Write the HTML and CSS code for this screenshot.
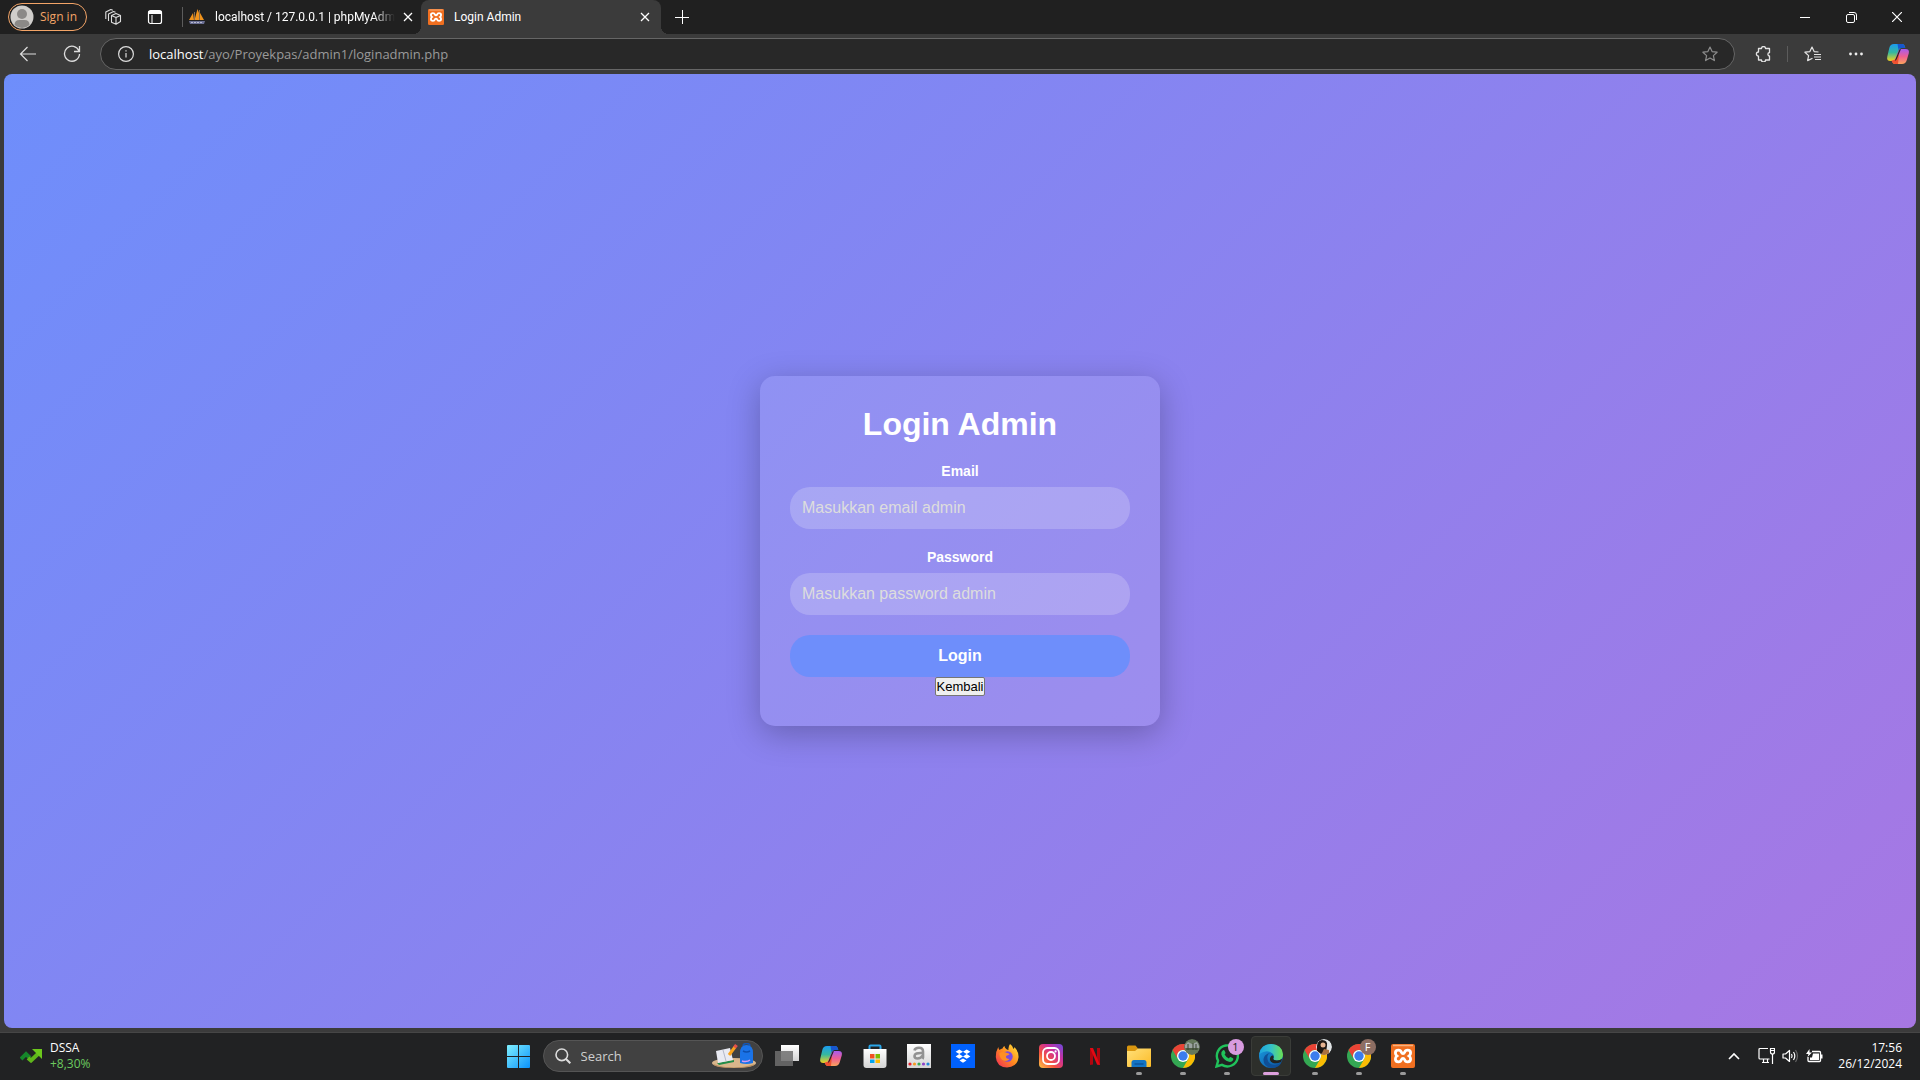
FILE: index.html
```html
<!DOCTYPE html>
<html lang="id">
<head>
<meta charset="utf-8">
<title>Login Admin</title>
<link rel="stylesheet" href="styles.css">
</head>
<body>
<svg class="defs" aria-hidden="true">
  <defs>
    <linearGradient id="cp1" x1="0" y1="0" x2="0" y2="1"><stop offset="0" stop-color="#1b9bf0"/><stop offset=".5" stop-color="#35b8a0"/><stop offset="1" stop-color="#f3d21c"/></linearGradient>
    <linearGradient id="cp2" x1="0" y1="0" x2="0" y2="1"><stop offset="0" stop-color="#a65cf0"/><stop offset=".5" stop-color="#ee5f93"/><stop offset="1" stop-color="#fba35c"/></linearGradient>
    <linearGradient id="win" x1="0" y1="0" x2="1" y2="1"><stop offset="0" stop-color="#7ff0ff"/><stop offset="1" stop-color="#0a91fa"/></linearGradient>
    <linearGradient id="ig" x1="0" y1="1" x2="1" y2="0"><stop offset="0" stop-color="#ffc845"/><stop offset=".35" stop-color="#f4513f"/><stop offset=".65" stop-color="#cb2f9c"/><stop offset="1" stop-color="#6b4be0"/></linearGradient>
    <linearGradient id="ff" x1="1" y1="0" x2="0" y2="1"><stop offset="0" stop-color="#ffe93b"/><stop offset=".5" stop-color="#ff8a1f"/><stop offset="1" stop-color="#f2245c"/></linearGradient>
    <linearGradient id="eg1" x1="0" y1="0" x2="1" y2="0"><stop offset="0" stop-color="#1ba3e0"/><stop offset=".5" stop-color="#35c1c8"/><stop offset="1" stop-color="#6be04f"/></linearGradient>
    <linearGradient id="eg2" x1="0" y1="0" x2="1" y2="1"><stop offset="0" stop-color="#1b9de2"/><stop offset="1" stop-color="#0b4f9c"/></linearGradient>
    <linearGradient id="fold" x1="0" y1="0" x2="1" y2="1"><stop offset="0" stop-color="#ffe07a"/><stop offset="1" stop-color="#fcbb27"/></linearGradient>
    <linearGradient id="white" x1="0" y1="0" x2="0" y2="1"><stop offset="0" stop-color="#fff"/><stop offset="1" stop-color="#d4d4d4"/></linearGradient>
  </defs>
  <symbol id="close" viewBox="0 0 16 16"><path d="M4 4l8 8M12 4l-8 8" fill="none" stroke="currentColor" stroke-width="1.300"/></symbol>
  <symbol id="copilot" viewBox="0 0 24 24">
    <path d="M8 2h8q2 0 2.600 1.800l.7 2.200h-3.800q-2 0-2.600 1.800L9.800 17q-.8 2-2.800 2H4.500Q.3 19 1.300 14.500L3.300 6Q4.200 2 8 2z" fill="url(#cp1)"/>
    <path d="M11.500 2h4.500q2 0 2.600 1.800l.7 2.200h-3.800q-2.500 0-3 2z" fill="#1756cf"/>
    <path d="M16 22H9q-2 0-2.600-1.700L5.500 18.500q3 .5 4-2.400L12.300 9Q13 7 15 7h4.500q4.200 0 3.300 4.300L20.800 18q-1 4-4.800 4z" fill="url(#cp2)"/>
    <path d="M12 22H9q-2 0-2.600-1.700L5.500 18.500q3.500.500 4.800-2.400L13 12z" fill="#f0502f"/>
    <path d="M13 8.500q.5-1.500 2-1.500L10.800 17q-.5 1.500-2 1.800z" fill="#262626"/>
  </symbol>
  <symbol id="xampp" viewBox="0 0 24 24">
    <rect width="24" height="24" rx="2" fill="#f06f20"/>
    <path d="M2 1.500h20" stroke="#f9b27d" stroke-width="1.500"/>
    <path d="M7.500 6.200Q9.700 6.200 10.300 8.200Q11 9.600 12 9.600Q13 9.600 13.700 8.200Q14.300 6.200 16.500 6.200Q19.600 6.200 19.600 9Q19.600 10.800 18 12Q19.600 13.200 19.600 15Q19.600 17.800 16.500 17.800Q14.300 17.800 13.700 15.800Q13 14.400 12 14.400Q11 14.400 10.300 15.800Q9.700 17.800 7.500 17.800Q4.400 17.800 4.400 15Q4.400 13.200 6 12Q4.400 10.800 4.400 9Q4.400 6.200 7.500 6.200z" fill="none" stroke="#fff" stroke-width="2.800"/>
  </symbol>
  <symbol id="chrome" viewBox="0 0 24 24">
    <circle cx="12" cy="12" r="12" fill="#34a853"/>
    <path d="M1.600 6A12 12 0 0 1 22.400 6H12a6 6 0 0 0-5.200 9z" fill="#ea4335"/>
    <path d="M22.400 6A12 12 0 0 1 12 24l5.200-9A6 6 0 0 0 12 6z" fill="#fbbc04"/>
    <circle cx="12" cy="12" r="6" fill="#fff"/><circle cx="12" cy="12" r="4.700" fill="#3b7ded"/>
  </symbol>
</svg>

<header class="titlebar">
  <button class="profile">
    <svg width="24" height="24" viewBox="0 0 24 24" aria-hidden="true"><circle cx="12" cy="12" r="11.500" fill="#d0cecb"/><circle cx="12" cy="9" r="5" fill="#8b8987"/><path d="M4.500 20q0-5 5-5h5q5 0 5 5a11 11 0 0 1-15 0z" fill="#8b8987"/></svg>
    <span>Sign in</span>
  </button>
  <button class="bar-btn" aria-label="Workspaces">
    <svg width="18" height="18" viewBox="0 0 18 18" fill="none" stroke="#ddd" stroke-width="1.100" stroke-linejoin="round"><path d="M7.500 7.500L12 5.500l4.500 2v6L12 16.300l-4.500-2zM7.500 7.500l4.500 2 4.500-2M12 9.500v6.800M4.500 13V6l5-2.500 2 .8M1.800 11V4l5-2.500 2 .8"/></svg>
  </button>
  <button class="bar-btn" aria-label="Tab actions">
    <svg width="16" height="16" viewBox="0 0 16 16"><rect x="1.500" y="1.500" width="13" height="13" rx="2" fill="none" stroke="#fff" stroke-width="1.200"/><path d="M1.500 2h13v3h-13z" fill="#fff"/><path d="M5 6v8" stroke="#fff"/></svg>
  </button>
  <span class="divider tab-divider"></span>
  <nav class="tabs" aria-label="Tabs">
    <div class="tab">
      <svg class="favicon" viewBox="0 0 16 16" aria-hidden="true"><path d="M0 11L4 4l1 7zM5.500 11L8.500 0l1.500 4v7zM10.500 11V3L15 11z" fill="#f0931c"/><path d="M5.500 3v8M10.500 1v10" stroke="#8a6d4a"/><path d="M0 12h16l-1 3H1z" fill="#6b6f93"/><path d="M2 13.500h12" stroke="#b6b9d0" stroke-dasharray="2 1"/></svg>
      <a class="tab-title faded" href="#">localhost / 127.0.0.1 | phpMyAdm</a>
      <button class="tab-close" aria-label="Close tab"><svg width="16" height="16"><use href="#close"/></svg></button>
    </div>
    <div class="tab active">
      <svg class="favicon" aria-hidden="true"><use href="#xampp"/></svg>
      <a class="tab-title" href="#">Login Admin</a>
      <button class="tab-close" aria-label="Close tab"><svg width="16" height="16"><use href="#close"/></svg></button>
    </div>
  </nav>
  <button class="new-tab" aria-label="New tab"><svg width="16" height="16" viewBox="0 0 16 16"><path d="M8.500 1v14M1 8.500h14" stroke="#fff"/></svg></button>
  <div class="window-controls">
    <button aria-label="Minimize"><svg width="10" height="10" viewBox="0 0 10 10"><path d="M0 5.500h10" stroke="#fff"/></svg></button>
    <button aria-label="Restore"><svg width="11" height="11" viewBox="0 0 11 11" fill="none" stroke="#fff"><rect x=".5" y="2.500" width="8" height="8" rx="1.500"/><path d="M3 .5h5q2.500 0 2.500 2.500v5"/></svg></button>
    <button aria-label="Close"><svg width="10" height="10" viewBox="0 0 10 10"><path d="M0 0l10 10M10 0L0 10" stroke="#fff" stroke-width="1.200"/></svg></button>
  </div>
</header>

<div class="toolbar">
  <button class="tool-btn" aria-label="Back"><svg width="18" height="18" viewBox="0 0 18 18" fill="none" stroke="#ddd" stroke-width="1.200"><path d="M17 9H1.500M8.500 2l-7 7 7 7"/></svg></button>
  <button class="tool-btn" aria-label="Refresh"><svg width="18" height="18" viewBox="0 0 18 18" fill="none" stroke="#ddd" stroke-width="1.300"><path d="M16 6A7.500 7.500 0 1 0 16.500 9M16.500 1v5.500H11"/></svg></button>
  <div class="address">
    <svg width="16" height="16" viewBox="0 0 16 16" fill="none" stroke="#ddd" stroke-width="1.200" aria-hidden="true"><circle cx="8" cy="8" r="7.400"/><path d="M8 7v4.500M8 4.200v1.400"/></svg>
    <div class="url" role="textbox" contenteditable="true" spellcheck="false" aria-label="Address"><span class="host">localhost</span>/ayo/Proyekpas/admin1/loginadmin.php</div>
    <button class="star" aria-label="Add to favorites"><svg width="16" height="16" viewBox="0 0 16 16" fill="none" stroke="#8c8c8c" stroke-width="1.200" stroke-linejoin="round"><path d="M8 1l2.100 4.600 5 .6-3.700 3.400 1 5L8 12.100l-4.400 2.500 1-5L.9 6.200l5-.6z"/></svg></button>
  </div>
  <button class="tool-btn" aria-label="Extensions"><svg width="16" height="16" viewBox="0 0 16 16" fill="none" stroke="#e4e4e4" stroke-width="1.300" stroke-linejoin="round"><path d="M6.500 2.500a2 2 0 0 1 4 0h4v4.200a1.600 1.600 0 1 0 0 3.200V14h-4a2 2 0 0 1-4 0H3.500v-3.800a2.100 2.100 0 1 1 0-4.200V2.500z"/></svg></button>
  <span class="divider"></span>
  <button class="tool-btn" aria-label="Favorites"><svg width="17" height="16" viewBox="0 0 17 16" fill="none" stroke="#e4e4e4" stroke-width="1.200" stroke-linejoin="round"><path d="M8.500 12.300L3.600 14.600l1-5L.9 6.200l5-.6L8 1l2.100 4.600 4.400.4M10 8.500h7M10 11h7M11 13.500h6"/></svg></button>
  <button class="tool-btn" aria-label="Settings and more"><svg width="14" height="4" viewBox="0 0 14 4" fill="#eee"><circle cx="1.500" cy="2" r="1.400"/><circle cx="7" cy="2" r="1.400"/><circle cx="12.500" cy="2" r="1.400"/></svg></button>
  <button class="tool-btn last" aria-label="Copilot"><svg width="24" height="24"><use href="#copilot"/></svg></button>
</div>

<main class="page">
  <form class="card">
    <h1>Login Admin</h1>
    <label for="email">Email</label>
    <input class="field" id="email" type="email" placeholder="Masukkan email admin">
    <label for="password">Password</label>
    <input class="field" id="password" type="password" placeholder="Masukkan password admin">
    <button class="submit" type="button">Login</button>
    <button class="back" type="button">Kembali</button>
  </form>
</main>

<footer class="taskbar">
  <button class="widget">
    <svg width="23" height="14" viewBox="0 0 23 14" aria-hidden="true"><path d="M1 10l5-5 4 4" fill="none" stroke="#16862a" stroke-width="4"/><path d="M8 9l3 2.500L19 4" fill="none" stroke="#5fb61b" stroke-width="4"/><path d="M12 0h10v10z" fill="#6cc81c"/></svg>
    <span class="widget-text"><span>DSSA</span><span class="gain">+8,30%</span></span>
  </button>
  <div class="apps">
    <button class="app" aria-label="Start"><svg width="24" height="24" viewBox="0 0 24 24"><path d="M2 1h10v11H1V2q0-1 1-1zM13 1h10q1 0 1 1v10H13zM1 13h11v11H2q-1 0-1-1zM13 13h11v10q0 1-1 1H13z" fill="url(#win)"/></svg></button>
    <div class="search">
      <svg width="16" height="16" viewBox="0 0 16 16" fill="none" stroke="#ddd" stroke-width="1.600" aria-hidden="true"><circle cx="6.800" cy="6.800" r="5.800"/><path d="M11 11l4.300 4.300" stroke-width="2"/></svg>
      <input type="search" placeholder="Search" aria-label="Search">
      <svg width="46" height="26" viewBox="0 0 46 26" aria-hidden="true"><ellipse cx="23" cy="20" rx="22" ry="5" fill="#d9b68c"/><path d="M2 21q20 7 42 0-2 4-21 4T2 21z" fill="#b98f60"/><path d="M6 20l17-3v2L8 22z" fill="#238c4a"/><path d="M5 8l14-3 3 12-15 3z" fill="#e9eaf2"/><path d="M12 7l3 11" stroke="#b4b8c9" fill="none"/><path d="M24 4l-6 8" stroke="#f9a21b" stroke-width="3"/><path d="M25.500 2L23.500 4.500" stroke="#e3524a" stroke-width="3.500"/><path d="M32 3q0-2.500 3.500-2.500t3.500 2.500" fill="none" stroke="#1355b5" stroke-width="1.500"/><path d="M29 20V10q0-8 6.500-8t6.500 8v10q-6.500 2-13 0z" fill="#1a73e8"/><path d="M32 8q3.500 2 7 0" stroke="#0d4fae" stroke-width="1.500" fill="none"/><path d="M31 18q5 1.500 8-1" stroke="#d29bf5" stroke-width="1.500" fill="none"/></svg>
    </div>
    <button class="app" aria-label="Task view"><svg width="24" height="24" viewBox="0 0 24 24"><rect x="6" y="1" width="18" height="16" fill="url(#white)"/><rect y="7" width="18" height="15" fill="#6f6f6f" fill-opacity=".85"/></svg></button>
    <button class="app" aria-label="Copilot"><svg width="24" height="24"><use href="#copilot"/></svg></button>
    <button class="app" aria-label="Microsoft Store"><svg width="24" height="24" viewBox="0 0 24 24"><path d="M6.500 6V2.500q0-1 1-1h9q1 0 1 1V6" fill="none" stroke="#2aa5e8" stroke-width="2"/><path d="M.5 5h23v16q0 3-3 3h-17q-3 0-3-3z" fill="url(#white)"/><path d="M7 10h4.500v4.500H7z" fill="#f25022"/><path d="M12.500 10H17v4.500h-4.500z" fill="#7fba00"/><path d="M7 15.500h4.500V19H7z" fill="#00a4ef"/><path d="M12.500 15.500H17V19h-4.500z" fill="#ffb900"/></svg></button>
    <button class="app" aria-label="Amazon"><svg width="24" height="24" viewBox="0 0 24 24"><path d="M0 0h24v24H0z" fill="url(#white)"/><path d="M7.500 6.500Q8 3.800 12 3.800t4 3.700V13q0 1.200 1 1.500M15.500 9Q7.500 8.500 7.500 12q0 2.500 3 2.500 3.500 0 5-3" fill="none" stroke="#929292" stroke-width="2.600"/><circle cx="3" cy="20" r="1.600" fill="#e9222d"/><circle cx="7.500" cy="20" r="1.600" fill="#f59a23"/><circle cx="12" cy="20" r="1.600" fill="#36a853"/><circle cx="16.500" cy="20" r="1.600" fill="#8e44c9"/><circle cx="21" cy="20" r="1.600" fill="#2088d8"/></svg></button>
    <button class="app" aria-label="Dropbox"><svg width="24" height="24" viewBox="0 0 24 24"><path d="M0 0h24v24H0z" fill="#0061fe"/><path d="M8.300 5.500l3.700 2.300-3.700 2.300-3.700-2.300zM15.700 5.500l3.700 2.300-3.700 2.300L12 7.800zM8.300 10.100l3.700 2.300-3.700 2.300-3.700-2.300zM15.700 10.100l3.700 2.300-3.700 2.300-3.700-2.300zM12 14.500l3.500 2.100-3.500 2.200-3.500-2.200z" fill="#fff"/></svg></button>
    <button class="app" aria-label="Firefox"><svg width="24" height="24" viewBox="0 0 24 24"><path d="M15 0q3 2 3.500 5 1-1 1-2 4.500 5 4 10.500Q22.500 23 12 23.500 1.500 23 .8 13 .8 7 3.300 3q.2 2 1.200 3 1.500-1.500 3-1.500Q8 2.500 9.500 2q.5 3 4 4Q13 3 15 0z" fill="url(#ff)"/><circle cx="12.500" cy="12.500" r="5.200" fill="#7a4be0"/><path d="M4.500 9q4-2 7.500 0 2.500 0 2.500 1.500L11 12q-.5 3 3.500 3-3 3.500-7 1Q4 13 4.500 9z" fill="#ff8f24"/></svg></button>
    <button class="app" aria-label="Instagram"><svg width="24" height="24" viewBox="0 0 24 24"><rect width="24" height="24" rx="4" fill="url(#ig)"/><g fill="none" stroke="#fff" stroke-width="1.800"><rect x="4" y="4" width="16" height="16" rx="4.500"/><circle cx="12" cy="12" r="4"/></g><circle cx="16.600" cy="7.400" r="1.100" fill="#fff"/></svg></button>
    <button class="app" aria-label="Netflix"><svg width="24" height="24" viewBox="0 0 24 24"><path d="M7 4h3v16.500l-3 .5zM14 4h3v17l-3-.5z" fill="#b1060f"/><path d="M7 4h3l7 17-3-.5z" fill="#e50914"/></svg></button>
    <button class="app running" aria-label="File Explorer"><svg width="24" height="24" viewBox="0 0 24 24"><path d="M0 3q0-1.500 1.500-1.500h7L11 4.500 9 8H0z" fill="#d9960f"/><path d="M0 7h8l3-2.500h13V22q0 1-1 1H1q-1 0-1-1z" fill="url(#fold)"/><path d="M4.500 23v-4.500q0-2.500 2.500-2.500h10q2.500 0 2.500 2.500V23z" fill="#1374c4"/><path d="M7.500 20h9" stroke="#0d559c" stroke-width="1.500"/></svg></button>
    <button class="app running" aria-label="Chrome"><svg width="24" height="24"><use href="#chrome"/></svg><svg class="badge" viewBox="0 0 16 16"><circle cx="8" cy="8" r="8" fill="#64785a"/><path d="M1 6l3-3 4 2 5-2 2 4v2H1z" fill="#9aa3a0"/><path d="M2 10h12M4 5v6M9 4v7M12 5v6" stroke="#39452f"/></svg></button>
    <button class="app running" aria-label="WhatsApp"><svg width="24" height="24" viewBox="0 0 24 24"><path d="M1.500 22.500l1.600-5.700A10.500 10.500 0 1 1 7 20.900z" fill="none" stroke="#20c25b" stroke-width="2.400"/><path d="M8 6.200q1-.5 1.500.3l1 2.300q.2.600-.9 1.800 1.500 2.800 4.300 3.800 1-1.400 1.700-1.300l2.400 1.200q.8.500 0 2-1.200 2-4 1.500Q8 16 6.300 10.500 5.800 7.500 8 6.200z" fill="#20c25b"/></svg><span class="badge count">1</span></button>
    <button class="app running current" aria-label="Microsoft Edge"><svg width="24" height="24" viewBox="0 0 24 24"><circle cx="12" cy="12" r="12" fill="url(#eg2)"/><path d="M.3 10Q2 0 12 0q11 0 12 10.500 0 6-6 6-4.500 0-3.500-2.500 1.500-2-1-4.500Q8 5 .3 10z" fill="url(#eg1)"/><path d="M8.500 12q-1 8 7 9 4 .2 7-3-2 6-10.500 6Q4 22 4.500 15q1-5 6.500-6-2 1-2.500 3z" fill="#0f4f97"/><path d="M14.500 14q-1 2.500 3.500 2.500 3 0 5.300-1.800L22 18q-4 2-8 1-4.500-2-2.500-6 1-2 2.500-1.500 1 1.500.5 2.500z" fill="#222421"/></svg></button>
    <button class="app running" aria-label="Chrome"><svg width="24" height="24"><use href="#chrome"/></svg><svg class="badge" viewBox="0 0 16 16"><circle cx="8" cy="8" r="8" fill="#dfe3e4"/><path d="M1 12Q0 1 6 1t5 6l-1 6-5 2z" fill="#1d1815"/><circle cx="7" cy="6" r="2.500" fill="#e5b492"/><path d="M5 16l3-6 5 1v3q-3 3-8 2z" fill="#a9713f"/></svg></button>
    <button class="app running" aria-label="Chrome"><svg width="24" height="24"><use href="#chrome"/></svg><span class="badge initial">F</span></button>
    <button class="app running" aria-label="XAMPP"><svg width="24" height="24"><use href="#xampp"/></svg></button>
  </div>
  <div class="tray">
    <button aria-label="Show hidden icons"><svg width="12" height="8" viewBox="0 0 12 8"><path d="M1 7l5-5 5 5" fill="none" stroke="#fff" stroke-width="1.600"/></svg></button>
    <button class="status" aria-label="Network, sound, battery">
      <svg width="17" height="17" viewBox="0 0 17 17" fill="none" stroke="#fff" stroke-width="1.200"><path d="M10 1.500H2q-1 0-1 1V11q0 1 1 1h9.500M4 15.500h7M5.500 12v3.500M9.500 12v3.500M14.500 7v10"/><path d="M12.500 1.500h4V5q0 2-2 2t-2-2zM12.500 3.500h4"/></svg>
      <svg width="17" height="14" viewBox="0 0 17 14" fill="none" stroke="#fff" stroke-width="1.200"><path d="M1 5h2.500L7.500 1.500v11L3.500 9H1z" stroke-linejoin="round"/><path d="M9.500 5q1.200 2 0 4M11.500 3q2.600 4 0 8"/><path d="M13.500 1q4 6 0 12" stroke="#666"/></svg>
      <svg width="17" height="14" viewBox="0 0 17 14"><path d="M6 2.500h7.500q1 0 1 1v8q0 1-1 1H3q-1 0-1-1V8" fill="none" stroke="#fff" stroke-width="1.300"/><path d="M7 4.500h6v6.500H4V8.500h2zM15 5.500h1.500v4H15zM3.500 0L0 5h2.500L1.500 8 6 3.500H3.500z" fill="#fff"/></svg>
    </button>
    <button class="clock"><time>17:56</time><span>26/12/2024</span></button>
  </div>
</footer>
</body>
</html>
```
FILE: styles.css
```css
* { box-sizing: border-box; }

body {
  margin: 0;
  height: 100vh;
  display: flex;
  flex-direction: column;
  overflow: hidden;
  background: #3b3b3b;
  color: #fff;
  font: 12px/16px "Open Sans", "Noto Sans", sans-serif;
}

button {
  display: flex;
  align-items: center;
  justify-content: center;
  padding: 0;
  border: 0;
  background: none;
  color: inherit;
  font: inherit;
}

a { color: inherit; text-decoration: none; }
svg { flex: none; }
.defs { position: absolute; width: 0; height: 0; }

.divider { width: 1px; height: 16px; background: #5c5c5c; }

/* Browser title bar */
.titlebar {
  display: flex;
  align-items: center;
  height: 34px;
  flex: none;
  background: #202020;
}
.profile {
  width: 79px;
  height: 28px;
  margin: 0 5px 0 8px;
  gap: 6px;
  padding: 0 10px 0 1px;
  justify-content: flex-start;
  border: 1px solid #f3a467;
  border-radius: 14px;
  color: #f3a467;
  white-space: nowrap;
}
.bar-btn { width: 42px; height: 34px; }
.tab-divider { height: 20px; margin-left: 6px; }
.tabs { display: flex; align-self: stretch; font-family: Roboto, "Noto Sans", sans-serif; }
.tab {
  display: flex;
  align-items: center;
  gap: 10px;
  width: 238px;
  padding: 0 7px 0 6px;
}
.tab.active {
  position: relative;
  width: 240px;
  padding: 0 8px 0 7px;
  border-radius: 8px 8px 0 0;
  background: #3b3b3b;
}
.tab.active::before,
.tab.active::after {
  content: "";
  position: absolute;
  bottom: 0;
  width: 8px;
  height: 8px;
}
.tab.active::before { left: -8px; background: radial-gradient(circle at 0 0, transparent 8px, #3b3b3b 8px); }
.tab.active::after { right: -8px; background: radial-gradient(circle at 100% 0, transparent 8px, #3b3b3b 8px); }
.favicon { width: 16px; height: 16px; }
.tab-title { flex: 1; white-space: nowrap; }
.faded { margin-right: -5px; mask-image: linear-gradient(to right, #000 88%, transparent); }
.new-tab { width: 32px; height: 32px; margin-left: 5px; }
.window-controls { display: flex; margin-left: auto; }
.window-controls button { width: 46px; height: 34px; }

/* Browser toolbar */
.toolbar {
  display: flex;
  align-items: center;
  gap: 4px;
  height: 40px;
  flex: none;
  padding: 0 4px 0 8px;
}
.tool-btn { width: 40px; height: 32px; }
.tool-btn.last { width: 36px; }
.address {
  display: flex;
  align-items: center;
  flex: 1;
  gap: 15px;
  height: 32px;
  margin: 0 4px;
  padding: 0 16px 0 17px;
  border: 1px solid #666;
  border-radius: 16px;
  background: #282828;
}
.url {
  flex: 1;
  color: #9a9a9a;
  font-size: 13px;
  line-height: 20px;
  white-space: nowrap;
  outline: none;
}
.host { color: #fff; }

/* Login page */
.page {
  display: flex;
  align-items: center;
  justify-content: center;
  flex: 1;
  margin: 0 4px 4px;
  border-radius: 8px;
  background: linear-gradient(135deg, #6e8efb, #a777e3);
  font-family: "Liberation Sans", Arial, sans-serif;
}
.card {
  display: flex;
  flex-direction: column;
  width: 400px;
  padding: 30px;
  border-radius: 15px;
  background: rgba(255, 255, 255, 0.1);
  box-shadow: 0 8px 32px rgba(0, 0, 0, 0.25);
}
h1 {
  margin: 0 0 20px;
  font-size: 32px;
  line-height: 37px;
  text-align: center;
}
label {
  margin-bottom: 8px;
  font-size: 14px;
  font-weight: bold;
  text-align: center;
}
.field {
  height: 42px;
  margin: 0 0 20px;
  padding: 0 12px;
  border: 0;
  border-radius: 20px;
  background: rgba(255, 255, 255, 0.2);
  color: #fff;
  font-family: inherit;
  font-size: 16px;
}
.field::placeholder { color: #ddd; opacity: 1; }
.submit {
  height: 42px;
  border-radius: 20px;
  background: #6e8efb;
  font-size: 16px;
  font-weight: bold;
}
.back {
  align-self: center;
  height: 19px;
  padding: 0 1px;
  border: 1px solid #767676;
  border-radius: 2px;
  background: #efefef;
  color: #000;
  font-size: 13px;
}

/* Windows taskbar */
.taskbar {
  display: grid;
  grid-template-columns: 1fr auto 1fr;
  align-items: center;
  height: 48px;
  flex: none;
  padding-bottom: 2px;
  border-top: 1px solid #464646;
  background: #212223;
}
.widget { justify-self: start; gap: 7px; padding-left: 20px; text-align: left; }
.widget-text { display: flex; flex-direction: column; }
.gain { color: #6ccb5f; }
.apps { display: flex; align-items: center; }
.app { position: relative; width: 44px; height: 45px; }
.search {
  display: flex;
  align-items: center;
  width: 220px;
  height: 32px;
  margin: 0 2px 0 3px;
  padding: 0 5px 0 11px;
  gap: 10px;
  border: 1px solid #555;
  border-radius: 16px;
  background: #414141;
}
.search input {
  flex: 1;
  min-width: 0;
  padding: 0;
  border: 0;
  outline: none;
  background: none;
  color: #fff;
  font: 13px/20px "Open Sans", "Noto Sans", sans-serif;
}
.search input::placeholder { color: #cfcfcf; opacity: 1; }
.running::after {
  content: "";
  position: absolute;
  bottom: 3px;
  left: 19px;
  width: 6px;
  height: 3px;
  border-radius: 2px;
  background: #9a9a9a;
}
.current::before {
  content: "";
  position: absolute;
  inset: 3px 2px 2px;
  border: 1px solid #3a3c38;
  border-radius: 4px;
  background: #2d2f2b;
}
.current svg { position: relative; }
.current::after { left: 14px; width: 16px; background: #dda0dd; }
.badge {
  position: absolute;
  top: 6px;
  right: 5px;
  width: 16px;
  height: 16px;
  border-radius: 50%;
  font-size: 11px;
}
.count { background: #d89be0; color: #222; }
.initial { background: #8d6e63; }
.tray { display: flex; align-items: center; justify-self: end; padding-right: 18px; }
.status { gap: 7px; margin: 0 15px 0 18px; }
.clock { flex-direction: column; align-items: flex-end; }
```
